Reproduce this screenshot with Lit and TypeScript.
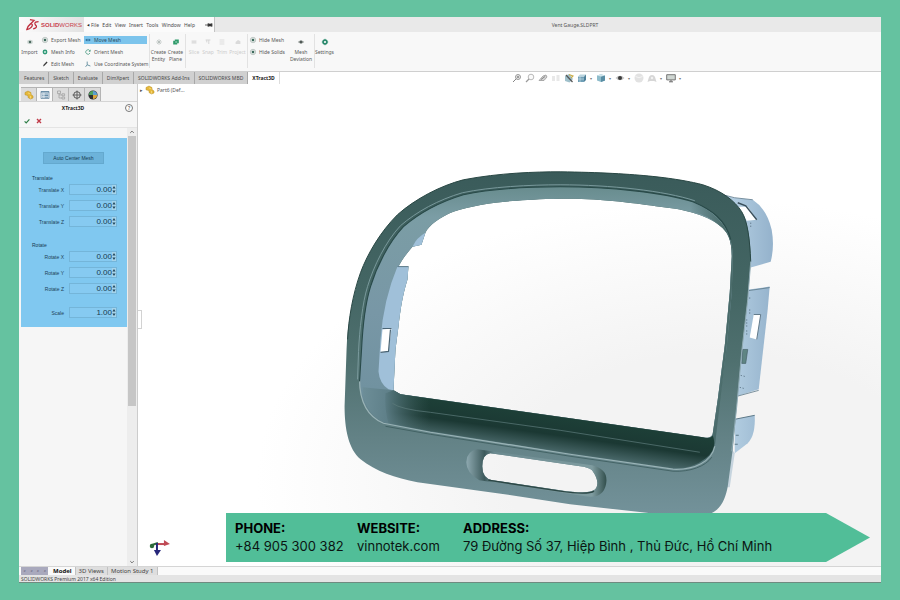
import { LitElement, html, css, svg, nothing } from "lit";
import { customElement, property } from "lit/decorators.js";
import { classMap } from "lit/directives/class-map.js";

const glyphs: Record<string, unknown> = {
  eye: svg`<circle cx="5" cy="5" r="3.4" fill="#dfe6e3" stroke="#a3afab" stroke-width=".7"/><circle cx="5" cy="5" r="1.6" fill="#3d6a5c"/>`,
  info: svg`<circle cx="5" cy="5" r="3" fill="#2f9a78"/><circle cx="5" cy="5" r="1.1" fill="#e6f5ef"/>`,
  pencil: svg`<path d="M2.5 8 3.2 6 7 2 8.2 3 4.3 7.1Z" fill="#3a3a3a"/>`,
  move: svg`<path d="M1.5 5 4 3v1.300h2V3l2.500 2L6 7V5.700H4V7Z" fill="#2f6f9c"/>`,
  orient: svg`<path d="M7.5 6.2A2.8 2.8 0 1 1 7.4 3.6M7.8 2.2v2H6" fill="none" stroke="#4a9a82" stroke-width="1"/>`,
  axes: svg`<path d="M4 2v4l4 1.5M4 6 2 8.5" fill="none" stroke="#4c7f92" stroke-width="1"/>`,
  burst: svg`<path d="M5 1.5v7M1.5 5h7M2.6 2.6l4.8 4.8M7.4 2.6 2.6 7.4" stroke="#aab4b0" stroke-width=".8"/>`,
  plane: svg`<path d="M1.500 3.500h2V2h5v4.500H6.500v1.500h-5Z" fill="#2f9a6a"/><path d="M4 5h2.5" stroke="#d7f2e6"/>`,
  cut: svg`<path d="M2 3h6v4H2Z" fill="#dedede"/>`,
  snap: svg`<path d="M2 2.5h6M6 2.5v5M3.5 2.5v3" stroke="#d4d4d4" stroke-width="1.2" fill="none"/>`,
  trim: svg`<path d="M2 2.5h6M2 5h6M2 7.5h6" stroke="#dcdcdc" stroke-width="1.2"/>`,
  project: svg`<path d="M2 7.5h6V4L5 2.5 2 5Z" fill="#dadada"/>`,
  deviation: svg`<path d="M1 5 5 2.500l4 2.500L5 7.500Z" fill="#8b938f"/><circle cx="5" cy="5" r="1.2" fill="#3a4240"/>`,
  gear: svg`<circle cx="5" cy="5" r="2.4" fill="none" stroke="#2b8a6d" stroke-width="2"/><path d="M5 1v1.300M5 7.700V9M1 5h1.300M7.700 5H9" stroke="#2b8a6d"/>`,
  importer: svg`<ellipse cx="5" cy="5" rx="3.6" ry="2.8" fill="#cfd8d4"/><circle cx="5" cy="5" r="1.6" fill="#4d6a60"/>`,
  part: svg`<path d="M1 2.5 4 1l3 1.6v2L9 6v2L6.5 9 4 7.5V5.6L1 4.8Z" fill="#e6b93c" stroke="#b58a1c" stroke-width=".5"/><path d="M4 3l2.5 1M6.5 6v2.5" stroke="#fbe08a" stroke-width=".7"/>`,
  list: svg`<path d="M1 1.500h8v7H1Z" fill="#f2f7fb" stroke="#6c8ba5" stroke-width=".8"/><path d="M1 2h8M2.3 4h1.2M2.3 5.6h1.2M2.3 7.2h1.2M4.4 4h3.8M4.4 5.6h3.8M4.4 7.2h3.8" stroke="#4b7696" stroke-width=".9"/>`,
  config: svg`<path d="M1.5 1h3v2.6h-3ZM6 3.8h2.6v2H6ZM6 7h2.6v2H6ZM3 3.6V8h3M3 4.9h3" fill="none" stroke="#a2a2a2" stroke-width=".8"/>`,
  target: svg`<circle cx="5" cy="5" r="3.3" fill="none" stroke="#4c4c4c" stroke-width=".9"/><path d="M5 .5v9M.5 5h9" stroke="#4c4c4c" stroke-width=".8"/>`,
  ball: svg`<circle cx="5" cy="5" r="4.6" fill="#2f2f33"/><path d="M5 5V.9A4.2 4.2 0 0 1 9.1 5Z" fill="#5c9fd0"/><path d="M5 5H.9A4.2 4.2 0 0 1 5 .9Z" fill="#4fa35f"/><path d="M5 5h4.1A4.2 4.2 0 0 1 5 9.1Z" fill="#d9a53c"/>`,
  zoomFit: svg`<circle cx="6" cy="4" r="2.5" fill="#f4f4f4" stroke="#8e8e8e" stroke-width=".9"/><path d="M4.2 5.8 1 9M4.8 4h2.4M6 2.8v2.4" stroke="#777" stroke-width=".9"/>`,
  zoomArea: svg`<circle cx="6" cy="4" r="2.8" fill="#fafafa" stroke="#b2b2b2" stroke-width=".9"/><path d="M4 6 1 9" stroke="#9a9a9a" stroke-width="1.2"/>`,
  prev: svg`<path d="M1 7.5 5 3l3-1 1 2-3 3.5H3Z" fill="#d4d4d4" stroke="#8f8f8f" stroke-width=".7"/><path d="M3 6.5 7 3.5" stroke="#666" stroke-width=".7"/>`,
  section: svg`<path d="M1 3h3v5H1ZM5.5 2h3v6h-3Z" fill="#e8e8e8"/>`,
  cube: svg`<path d="M1 3 5 1l4 5-3.500 3.500L1 8Z" fill="#9fc0cb"/><path d="M2 2 8.500 9" stroke="#555" stroke-width="1.200"/><path d="M5 1.600 9 3 7 5" fill="none" stroke="#c9ad4c" stroke-width="1.2"/>`,
  orientCube: svg`<path d="M1 3.5h6V9H1Z" fill="#6f9fb6"/><path d="M1 3.5 3 1.5h6L7 3.5Z" fill="#b9d4de"/><path d="M7 3.5l2-2V7L7 9Z" fill="#4d7f98"/><path d="M3 3.5V9M1 6h6" stroke="#d3e5ec" stroke-width=".6"/>`,
  style: svg`<path d="M1 2.5 5 1.2 9 2.5v5L5 9 1 7.5Z" fill="#8ebccb"/><path d="M5 3.6 9 2.5v5L5 9Z" fill="#5a8ea4"/><path d="M1 2.5 5 1.2 9 2.5 5 3.6Z" fill="#d2e6ec"/>`,
  look: svg`<path d="M.5 5Q5 .5 9.5 5 5 9.5.5 5Z" fill="#c4c4c4"/><circle cx="5" cy="5" r="2" fill="#3c3c3c"/>`,
  sphere: svg`<circle cx="5" cy="5" r="4.500" fill="#e2e2e2"/><path d="M1.5 3.5Q5 6 8.5 3.5" stroke="#f4f4f4" fill="none"/>`,
  scene: svg`<path d="M.5 9 2 4a3.200 3.200 0 0 1 6 0L9.500 9 7 8H3Z" fill="#d6d6d6"/><circle cx="5" cy="5" r="1.2" fill="#f2f2f2"/>`,
  monitor: svg`<path d="M.7 1.7h8.6v5.2H.7Z" fill="#cfd6d2" stroke="#6a6a6a" stroke-width=".9"/><path d="M3 8.8h4M5 7v1.8" stroke="#6a6a6a" stroke-width="1"/>`,
  check: svg`<path d="M2 5.400 4 7.400 8 3" fill="none" stroke="#2e7d46" stroke-width="1.500"/>`,
  cross: svg`<path d="M2.5 2.5 7.5 7.5M7.5 2.5 2.5 7.5" stroke="#c03a48" stroke-width="1.7"/>`,
  pin: svg`<path d="M0 5h4M4 2.500v5M8.500 2.500v5M4 3.800h4.500v2.400H4Z" fill="#333" stroke="#333" stroke-width=".9"/>`,
};

const icon = (name: string) =>
  html`<svg class="icon" viewBox="0 0 10 10" aria-hidden="true">${glyphs[name]}</svg>`;

const shared = css`
  :host { display: block; box-sizing: border-box; }
  *, *::before, *::after { box-sizing: border-box; }
  button {
    margin: 0; padding: 0; border: 0; background: none;
    font: inherit; color: inherit; text-align: left;
  }
  .icon { width: 10px; height: 10px; flex: none; display: block; }
`;

@customElement("title-bar")
class TitleBar extends LitElement {
  static styles = [shared, css`
    :host { display: flex; height: 15px; background: #e9e9e9; font-size: 5px; color: #4a4a4a; }
    .menu { display: flex; align-items: center; background: #fbfbfb; border-right: 1px solid #c4c4c4; width: 196px; flex: none; }
    .brand { display: flex; align-items: center; gap: 2px; width: 65px; height: 15px; padding-left: 7px; background: linear-gradient(90deg, #fbfbfb, #e2e2e2); }
    .mark { width: 13px; height: 13px; flex: none; }
    .name { font: 700 6px/12px "Liberation Sans", Arial, sans-serif; color: #c8404c; }
    .name span { font-weight: 400; }
    .arrow { width: 7px; text-align: center; font-size: 3px; color: #222; }
    .items { display: flex; flex: 1; padding-right: 10px; justify-content: space-between; }
    .menu .icon { width: 8px; height: 8px; margin-right: 1px; }
    .doc { flex: 1; text-align: center; line-height: 16px; padding-left: 54px; color: #555; }
  `];
  render() {
    return html`
      <nav class="menu">
        <span class="brand">
          <svg class="mark" viewBox="0 0 12 12" aria-hidden="true">
            <path d="M3.6 1.4 7.4 2.2 4.6 5M4.4 5.2Q7 5.8 5 8.4 3.4 10.4.8 10.6 1.6 7.4 4.4 5.2ZM11.6 3.4Q8 3.4 8.2 5.2 8.4 6.4 9.6 7.4 10 9.4 6.6 10" fill="none" stroke="#bf2f3d" stroke-width="1.2"/>
          </svg>
          <span class="name">SOLID<span>WORKS</span></span>
        </span>
        <span class="arrow">◀</span>
        <span class="items">
          ${["File", "Edit", "View", "Insert", "Tools", "Window", "Help"].map(
            (t) => html`<button>${t}</button>`)}
        </span>
        ${icon("pin")}
      </nav>
      <span class="doc">Vent Gauge.SLDPRT</span>
    `;
  }
}

@customElement("command-ribbon")
class CommandRibbon extends LitElement {
  static styles = [shared, css`
    :host { display: flex; height: 40px; padding: 2px 2px 3px; background: #f8f8f8; border-bottom: 1px solid #cfcfcf; font-size: 5px; line-height: 7px; color: #5a5a5a; }
    .tile { width: 17px; padding-top: 4px; display: flex; flex-direction: column; align-items: center; justify-content: flex-start; text-align: center; }
    .narrow { width: 14px; }
    .wide { width: 24px; }
    .off { color: #cccccc; }
    .tile .icon { width: 8px; height: 8px; margin-bottom: 3px; }
    .stack { display: flex; flex-direction: column; gap: 4px; padding-top: 2px; width: 40px; }
    .stack.first { width: 46px; padding-left: 3px; }
    .stack.long { width: 65px; }
    .stack button { display: flex; align-items: center; gap: 2px; height: 8px; white-space: nowrap; }
    .stack .icon { width: 8px; height: 8px; }
    .long button { width: 63px; }
    .on { background: #7cc4ec; color: #2b4c60; }
    .sep { width: 1px; margin: 0 1px; background: #e2e2e2; }
    .long + .sep { margin: 0; }
  `];
  tile(name: string, label: unknown, kind = "") {
    return html`<button class="tile ${kind}">${icon(name)}<span>${label}</span></button>`;
  }
  row(name: string, label: string, on = false) {
    return html`<button class=${classMap({ on })}>${icon(name)}${label}</button>`;
  }
  render() {
    return html`
      ${this.tile("importer", "Import")}
      <div class="stack first">
        ${this.row("eye", "Export Mesh")} ${this.row("info", "Mesh Info")} ${this.row("pencil", "Edit Mesh")}
      </div>
      <div class="stack long">
        ${this.row("move", "Move Mesh", true)} ${this.row("orient", "Orient Mesh")}
        ${this.row("axes", "Use Coordinate System")}
      </div>
      <i class="sep"></i>
      ${this.tile("burst", html`Create<br />Entity`)} ${this.tile("plane", html`Create<br />Plane`)}
      <i class="sep"></i>
      ${this.tile("cut", "Slice", "narrow off")} ${this.tile("snap", "Snap", "narrow off")}
      ${this.tile("trim", "Trim", "narrow off")} ${this.tile("project", "Project", "off")}
      <i class="sep"></i>
      <div class="stack">${this.row("eye", "Hide Mesh")} ${this.row("eye", "Hide Solids")}</div>
      ${this.tile("deviation", html`Mesh<br />Deviation`, "wide")}
      <i class="sep"></i>
      ${this.tile("gear", "Settings")}
    `;
  }
}

@customElement("tab-strip")
class TabStrip extends LitElement {
  static styles = [shared, css`
    :host { display: flex; height: 12px; background: #ffffff; font-size: 5px; color: #4a4a4a; }
    .tabs { display: flex; padding-left: 1px; background: #d0d0d0; }
    .tabs button { padding: 0 4px; border-right: 1px solid #a8a8a8; line-height: 11px; white-space: nowrap; }
    .tabs .on { background: #fff; color: #222; font-weight: 700; border-right-color: #ddd; }
    .hud { flex: 1; display: flex; align-items: center; justify-content: center; gap: 3px; padding-left: 34px; }
    .more { font-size: 4px; color: #777; margin-right: 1px; }
  `];
  render() {
    const tabs = ["Features", "Sketch", "Evaluate", "DimXpert", "SOLIDWORKS Add-Ins", "SOLIDWORKS MBD", "XTract3D"];
    const tools = ["zoomFit", "zoomArea", "prev", "section", "cube", "orientCube*", "style*", "look*", "sphere", "scene*", "monitor*"];
    return html`
      <div class="tabs">
        ${tabs.map((t) => html`<button class=${classMap({ on: t === "XTract3D" })}>${t}</button>`)}
      </div>
      <div class="hud">
        ${tools.map((t) => html`<button aria-label=${t.replace("*", "")}>${icon(t.replace("*", ""))}</button>
          ${t.endsWith("*") ? html`<span class="more">▾</span>` : nothing}`)}
      </div>
    `;
  }
}

@customElement("number-field")
class NumberField extends LitElement {
  @property() label = "";
  @property() value = "0.00";
  static styles = [shared, css`
    :host { display: grid; grid-template-columns: 43px 48px; gap: 5px; height: 12px; align-items: center; }
    label { text-align: right; padding-top: 2px; color: #1f4358; }
    .box { display: flex; align-items: center; height: 11px; border: 1px solid #74b5d9; background: #86caf1; }
    input { flex: 1; min-width: 0; padding: 0; border: 0; background: none; text-align: right; font: 8px/9px "Liberation Sans", Arial, sans-serif; color: #173a50; }
    .spin { width: 4px; height: 9px; flex: none; display: block; background: #a5d3ea; }
  `];
  render() {
    return html`
      <label for="field">${this.label}</label>
      <span class="box">
        <input id="field" inputmode="decimal" .value=${this.value} />
        <svg class="spin" viewBox="0 0 4 9" aria-hidden="true"><path d="M2 1 3.6 3.4H.4ZM2 8 .4 5.6h3.2Z" fill="#25485c"/></svg>
      </span>
    `;
  }
}

@customElement("property-panel")
class PropertyPanel extends LitElement {
  static styles = [shared, css`
    :host { display: flex; flex-direction: column; background: #f6f6f6; border-right: 1px solid #cccccc; font-size: 5px; color: #333; }
    .tabs { display: flex; padding: 3px 2px 0; border-bottom: 1px solid #d5d5d5; background: #f3f3f3; }
    .tabs button { width: 16px; height: 14px; display: grid; place-items: center; border: 1px solid #b4b4b4; border-bottom: 0; border-left: 0; background: #dcdcdc; }
    .tabs .on { background: #f8f8f8; }
    .head { display: grid; grid-template-columns: 8px 1fr 8px; align-items: center; height: 12px; padding: 0 4px; text-align: center; }
    .head strong { color: #222; padding-right: 10px; }
    .help { width: 8px; height: 8px; border: 1px solid #777; border-radius: 50%; line-height: 6px; text-align: center; background: #fff; }
    .actions { display: flex; gap: 4px; padding: 0 4px; height: 13px; align-items: center; }
    .actions .icon { width: 8px; height: 8px; }
    .body { flex: 1; display: grid; grid-template-columns: 1fr 10px; border-top: 1px solid #e4e4e4; }
    .form { margin: 10px 0 0 2px; padding: 14px 10px 9px 0; background: #80c8f0; align-self: start; font-family: "Liberation Sans", Arial, sans-serif; }
    .center { display: block; margin: 0 0 10px 22px; width: 61px; height: 12px; background: #6db3da; border: 1px solid #64a9cf; text-align: center; color: #173a50; }
    fieldset { margin: 0 0 14px; padding: 0; border: 0; display: grid; gap: 4px; }
    legend { padding: 0 0 0 11px; height: 9px; line-height: 8px; color: #173a50; }
    fieldset.tight { margin-bottom: 12px; }
    .bar { display: flex; flex-direction: column; background: #ededed; padding: 0 1px; }
    .cap { height: 8px; width: 8px; }
    .thumb { height: 270px; background: #c6c6c6; }
    .rest { flex: 1; }
  `];
  render() {
    return html`
      <div class="tabs">
        ${["part", "list", "config", "target", "ball"].map(
          (n) => html`<button aria-label=${n} class=${classMap({ on: n === "list" })}>${icon(n)}</button>`)}
      </div>
      <div class="head"><i></i><strong>XTract3D</strong><button class="help">?</button></div>
      <div class="actions">
        <button aria-label="OK">${icon("check")}</button>
        <button aria-label="Cancel">${icon("cross")}</button>
      </div>
      <div class="body">
        <form class="form">
          <button type="button" class="center">Auto Center Mesh</button>
          <fieldset>
            <legend>Translate</legend>
            ${["X", "Y", "Z"].map((a) => html`<number-field label="Translate ${a}"></number-field>`)}
          </fieldset>
          <fieldset class="tight">
            <legend>Rotate</legend>
            ${["X", "Y", "Z"].map((a) => html`<number-field label="Rotate ${a}"></number-field>`)}
          </fieldset>
          <number-field label="Scale" value="1.00"></number-field>
        </form>
        <div class="bar">
          <svg class="cap" viewBox="0 0 9 8"><path d="M2.5 5 4.5 3l2 2" fill="none" stroke="#666"/></svg>
          <div class="thumb"></div>
          <div class="rest"></div>
          <svg class="cap" viewBox="0 0 9 8"><path d="M2.5 3 4.5 5l2-2" fill="none" stroke="#666"/></svg>
        </div>
      </div>
    `;
  }
}

const OUTER = "M560 172C535 172 500 173 463 180C440 186 415 199 397 215C380 232 367 254 360 273C351 300 347 325 346 350L344 407C344 430 348 450 360 460C375 472 395 479 417 483L497 494L570 505L640 513C670 517 700 519 712 514C722 509 726 498 728 487L733 450L737 407L742 352L748 300L751 262C751 240 748 222 742 212C735 201 722 191 703 185C680 179 640 173 560 172Z";
const OPENING = "M570 199C545 199 530 200 517 201C495 202 472 206 453 212C440 217 428 226 425 233L421 245L412 247C406 254 401 261 398 267L408 267L407 280C402 296 400 310 398 327L395 350L393 391L400 395L570 419L703 438Q712 440 713 434L718 400L725 346L730 293L732 257C732 240 728 232 720 226C706 214 680 209 660 207C640 204 600 199 570 199Z";
const RIDGE = "M560 187C530 187 490 189 463 195C440 202 418 214 403 227C388 243 376 267 370 287C365 303 362 330 361 350L359 380C359 402 367 417 383 424L430 433L517 446L570 455L673 470C695 471 712 462 715 447L720 400L727 346L732 293L733 257C733 236 724 215 693 202C665 193 610 187 560 187Z";
const FLOOR = "M393 391L400 395L570 419L703 438Q711 440 713 436Q718 450 706 459Q692 470 673 469L570 454L430 432L388 424Q384 410 385 394Z";

@customElement("model-view")
class ModelView extends LitElement {
  static styles = [shared, css`
    :host { position: relative; background: radial-gradient(ellipse 62% 58% at 78% 82%, #f3f3f3 45%, #ffffff 100%); overflow: hidden; font-size: 5px; color: #555; }
    .tree { display: flex; align-items: center; gap: 2px; padding: 0 2px; height: 12px; }
    .scene { position: absolute; inset: 0; width: 100%; height: 100%; }
    .grip { position: absolute; left: 0; top: 226px; width: 4px; height: 19px; border: 1px solid #d2d2d2; border-left: 0; background: #fff; }
  `];
  render() {
    return html`
      <svg class="scene" viewBox="137 84 744 483" preserveAspectRatio="xMinYMin meet" role="img" aria-label="Vent gauge bezel">
        <defs>
          <linearGradient id="face" x1="0" y1="172" x2="0" y2="515" gradientUnits="userSpaceOnUse">
            <stop offset="0" stop-color="#3a5b5a"/><stop offset=".35" stop-color="#446664"/>
            <stop offset=".55" stop-color="#4f706f"/><stop offset=".78" stop-color="#638286"/><stop offset="1" stop-color="#73929a"/>
          </linearGradient>
          <linearGradient id="wall" x1="0" y1="187" x2="0" y2="440" gradientUnits="userSpaceOnUse">
            <stop offset="0" stop-color="#688c8e"/><stop offset=".12" stop-color="#7b9da5"/>
            <stop offset=".5" stop-color="#7897a6"/><stop offset=".8" stop-color="#7192a0"/><stop offset="1" stop-color="#4f6f73"/>
          </linearGradient>
          <linearGradient id="right" x1="690" y1="0" x2="725" y2="0" gradientUnits="userSpaceOnUse">
            <stop offset="0" stop-color="#3a5b5a" stop-opacity="0"/><stop offset="1" stop-color="#4a6b69"/>
          </linearGradient>
          <linearGradient id="floor" x1="560" y1="418" x2="555" y2="454" gradientUnits="userSpaceOnUse">
            <stop offset="0" stop-color="#1d3f37"/><stop offset=".5" stop-color="#1b3833"/><stop offset="1" stop-color="#4c6b6d"/>
          </linearGradient>
          <linearGradient id="blend" x1="362" y1="0" x2="430" y2="0" gradientUnits="userSpaceOnUse">
            <stop offset="0" stop-color="#6d8e98"/><stop offset=".35" stop-color="#5f8089" stop-opacity=".9"/><stop offset="1" stop-color="#3f605f" stop-opacity="0"/>
          </linearGradient>
          <linearGradient id="clip" x1="735" y1="0" x2="775" y2="0" gradientUnits="userSpaceOnUse">
            <stop offset="0" stop-color="#b1cce0"/><stop offset="1" stop-color="#93b1cb"/>
          </linearGradient>
          <linearGradient id="recess" x1="466" y1="0" x2="606" y2="0" gradientUnits="userSpaceOnUse">
            <stop offset="0" stop-color="#8ea9b0"/><stop offset=".13" stop-color="#3d5a5c"/><stop offset=".2" stop-color="#6b8a90"/><stop offset=".9" stop-color="#7f9ca0"/><stop offset="1" stop-color="#34514f"/>
          </linearGradient>
        </defs>

        <path d="M722 195L734 198L753 200Q767 209 772 230Q775 247 771 262L751 268L740 220Z" fill="url(#clip)"/>
        <path d="M723 195L735 198L753 200" fill="none" stroke="#7790a0"/>
        <path d="M739 207L748 207L757 220L747 221Z" fill="#fff"/><path d="M738 203L746 206L757 220" fill="none" stroke="#3a4f5b" stroke-width="1.4"/>
        <path d="M749 290L770 287L768 310L759 390L737 397Z" fill="url(#clip)"/>
        <path d="M749 291L770 288M737 397L759 391" stroke="#5d7888" stroke-width=".8"/>
        <path d="M754 315H761L757 340L750 338Z" fill="#fff"/><path d="M754 315H761L757 340" fill="none" stroke="#62798a"/>
        <path d="M743 350L748 350L746 364L742 364Z" fill="#5f8583" stroke="#3f5960" stroke-width=".6"/>
        <path d="M750 298v3M750 310v5M747 320v8M747 331v5M741 376l4 1M740 388l4 1M751 223v5" stroke="#4d6576" stroke-width="1" stroke-dasharray="1 2"/>
        <path d="M735 420L755 416Q756 436 748 444L735 454Z" fill="url(#clip)"/>
        <path d="M735 420L755 416M736 436h3M735 445h3" stroke="#5d7888"/>
        <path d="M732 450L735 454L730 488L727 488Z" fill="#c6d4de"/>

        <path d="${OUTER}${OPENING}M490 454Q482 455 482 467T492 481L560 491Q592 496 596 489T592 471Q588 468 580 467Z" fill="url(#face)" fill-rule="evenodd"/>
        <path d="M347 340C348 320 352 295 360 273C367 254 380 232 397 215C415 199 440 186 463 180C500 173 535 172 560 172C640 173 680 179 703 185C722 191 735 201 742 212C748 222 750 240 751 262" fill="none" stroke="#294744" stroke-width="1"/>
        <path d="${RIDGE}${OPENING}" fill="url(#wall)" fill-rule="evenodd"/>
        <path d="M690 201C724 215 733 236 733 257L732 293L727 346L715 447L713 434L718 400L725 346L730 293L732 257C732 240 728 232 720 226C706 214 695 213 690 212Z" fill="url(#right)"/>
        <path d="${FLOOR}" fill="url(#floor)"/>
        <path d="M362 388L393 391L400 395L430 399V433L388 425Q364 418 362 388Z" fill="url(#blend)"/>
        <path d="M392 404Q400 410 430 413L560 431L700 453" fill="none" stroke="#5e7c7c" stroke-width=".7"/>
        <path d="M359 380C359 402 367 417 383 424L430 433L570 455L673 470C695 471 712 462 715 447" fill="none" stroke="#9ab3b6" stroke-width="1.2"/>
        <path d="M385 427L430 435L570 457L673 472C690 473 706 467 712 458" fill="none" stroke="#3b5b5c" stroke-width=".8"/>
        <path d="M359 382L361 350C362 330 365 303 370 287C376 267 388 243 403 227C418 214 440 202 463 195C490 189 530 187 560 187C610 187 665 193 693 202C712 210 726 220 731 240" fill="none" stroke="#294a49" stroke-width="1.1"/>
        <path d="M357 380L358 352C359 330 362 303 367 287C373 267 385 242 400 226C416 212 438 200 462 193C490 187 530 185 560 185C610 185 665 191 695 201" fill="none" stroke="#7f9fa2" stroke-width=".9"/>
        <path d="M751 262L748 300L742 352L737 407L732 452" fill="none" stroke="#90abb4" stroke-width="1"/>

        <path d="M397 267L408 267L407 280C402 296 400 310 398 327L395 350L393 391L388 390Q379 384 378 372L380 340Q383 300 397 267Z" fill="#a0c0d9"/>
        <path d="M425 233L421 245L412 247Q416 238 425 233Z" fill="#a0c0d9"/>
        <path d="M397 267L408 267" stroke="#54707e" stroke-width=".8"/>
        <path d="M382 330L391 329L388 352L380 353Z" fill="#fff"/><path d="M391 329H382M390 330L388 352L380 353" fill="none" stroke="#4a6474" stroke-width="1.2"/>

        <path d="M477 450Q466 452 466 463T479 481L585 497Q603 500 606 485T592 466ZM490 454Q482 455 482 467T492 481L560 491Q592 496 596 489T592 471Q588 468 580 467Z" fill="url(#recess)" fill-rule="evenodd"/>
        <path d="M488 481L560 492Q588 496 594 492" fill="none" stroke="#2c4745" stroke-width="1.4"/>

        <path d="M157 545H165" stroke="#c04a55" stroke-width="2"/><path d="M163 541L169 545L163 547Z" fill="#c04a55"/>
        <path d="M157 544L151 546" stroke="#2c6a3a" stroke-width="2"/><circle cx="151" cy="547" r="2.2" fill="#2c6a3a"/>
        <path d="M156 544V552" stroke="#26267a" stroke-width="2"/><path d="M153 551H160L156 557Z" fill="#26267a"/>
      </svg>
      <div class="tree">▸ ${icon("part")}<span>Part6 (Def...</span></div>
      <div class="grip"></div>
    `;
  }
}

@customElement("contact-banner")
class ContactBanner extends LitElement {
  static styles = [shared, css`
    :host { height: 49px; padding: 6px 60px 0 9px; background: #51be98; clip-path: polygon(0 0, calc(100% - 44px) 0, 100% 50%, calc(100% - 44px) 100%, 0 100%); font: 13px/18px Inter, "Open Sans", sans-serif; color: #0b1512; white-space: nowrap; }
    dl { margin: 0; display: grid; grid-template-columns: 122px 106px 1fr; }
    dt { font-weight: 700; color: #000; }
    dd { margin: 0; }
    a { color: inherit; text-decoration: none; }
  `];
  render() {
    return html`
      <dl>
        <div><dt>PHONE:</dt><dd>+84 905 300 382</dd></div>
        <div><dt>WEBSITE:</dt><dd><a href="https://vinnotek.com">vinnotek.com</a></dd></div>
        <div><dt>ADDRESS:</dt><dd>79 Đường Số 37, Hiệp Bình , Thủ Đức, Hồ Chí Minh</dd></div>
      </dl>
    `;
  }
}

@customElement("app-root")
class AppRoot extends LitElement {
  static styles = [shared, css`
    :host { position: relative; min-height: 100vh; padding: 17px 19px; background: #65c2a0; display: flex; font-family: "Noto Sans", "Open Sans", sans-serif; }
    .window { flex: 1; min-width: 0; display: flex; flex-direction: column; background: #fff; }
    .work { flex: 1; display: grid; grid-template-columns: 119px 1fr; }
    .views { display: flex; height: 9px; padding-left: 2px; border-top: 1px solid #d5d5d5; background: #fafafa; font-size: 5px; line-height: 8px; color: #444; }
    .nav { width: 27px; background: #a9a9bd; color: #77778f; font-size: 4px; display: flex; justify-content: space-around; }
    .views .tab { padding: 0 3px; background: #dedede; border-right: 1px solid #c2c2c2; font-size: 6px; }
    .views .on { background: #fafafa; font-weight: 700; color: #111; padding-left: 5px; }
    .status { height: 8px; padding-left: 2px; background: #e4e4e4; border-bottom: 1px solid #6f8a80; font-size: 5px; line-height: 8px; color: #444; }
    contact-banner { position: absolute; left: 226px; right: 30px; bottom: 38px; }
  `];
  render() {
    return html`
      <main class="window">
        <title-bar></title-bar>
        <command-ribbon></command-ribbon>
        <tab-strip></tab-strip>
        <div class="work">
          <property-panel></property-panel>
          <model-view></model-view>
        </div>
        <div class="views">
          <span class="nav"><i>◂</i><i>◂</i><i>▸</i><i>▸</i></span>
          <button class="tab on">Model</button><button class="tab">3D Views</button><button class="tab">Motion Study 1</button>
        </div>
        <div class="status">SOLIDWORKS Premium 2017 x64 Edition</div>
      </main>
      <contact-banner></contact-banner>
    `;
  }
}
